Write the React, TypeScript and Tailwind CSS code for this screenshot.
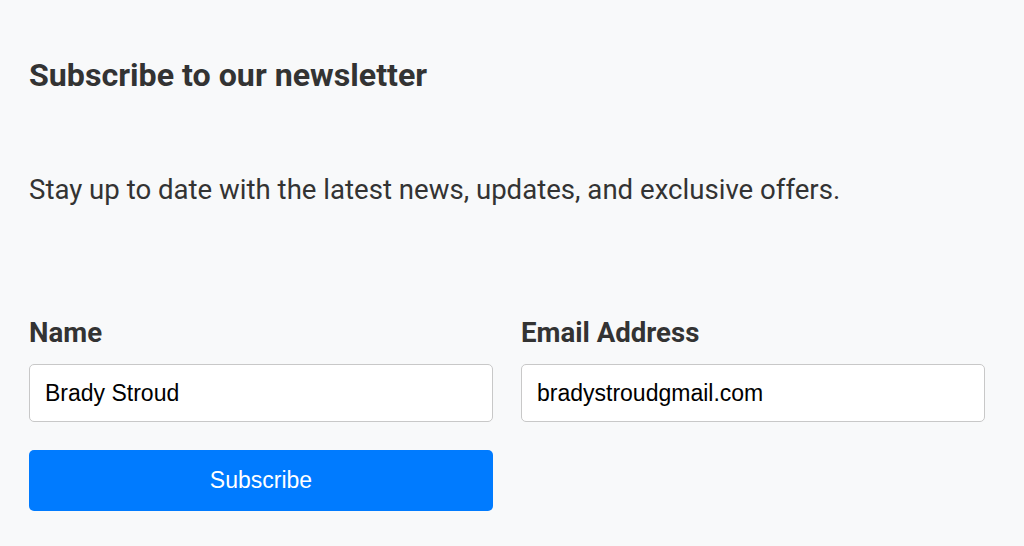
import React, { useState } from "react";

const App = () => {
  const [form, setForm] = useState({
    name: "Brady Stroud",
    email: "bradystroudgmail.com",
  });

  const handleChange = (e: any) => {
    const { name, value } = e.target;
    setForm((prev) => ({ ...prev, [name]: value }));
  };

  return (
    <div className="min-h-[546px] bg-[#f8f9fa] pl-[29px] pr-[39px] pt-[56px] text-[#333] font-['Roboto',sans-serif]">
      <h2 className="text-[32.2px] font-bold leading-[38px]">
        Subscribe to our newsletter
      </h2>
      <p className="mt-[80px] text-[27.6px] leading-[32px]">
        Stay up to date with the latest news, updates, and exclusive offers.
      </p>

      <form
        onSubmit={(e) => e.preventDefault()}
        className="mt-[111px] grid grid-cols-2 gap-x-[28px]"
      >
        <div>
          <label className="block text-[27.6px] font-bold leading-[32px]">
            Name
          </label>
          <input
            type="text"
            name="name"
            value={form.name}
            onChange={handleChange}
            className="mt-[15px] h-[58px] w-full rounded-[5px] border border-[#c8c8c8] bg-white px-[15px] text-[23px] text-black outline-none font-['Liberation_Sans',Arial,sans-serif]"
          />
        </div>
        <div>
          <label className="block text-[27.6px] font-bold leading-[32px]">
            Email Address
          </label>
          <input
            type="email"
            name="email"
            value={form.email}
            onChange={handleChange}
            className="mt-[15px] h-[58px] w-full rounded-[5px] border border-[#c8c8c8] bg-white px-[15px] text-[23px] text-black outline-none font-['Liberation_Sans',Arial,sans-serif]"
          />
        </div>
        <button
          type="submit"
          className="mt-[28px] h-[61px] w-full rounded-[5px] bg-[#007bff] text-[23px] text-white font-['Liberation_Sans',Arial,sans-serif]"
        >
          Subscribe
        </button>
      </form>
    </div>
  );
};

export default App;
